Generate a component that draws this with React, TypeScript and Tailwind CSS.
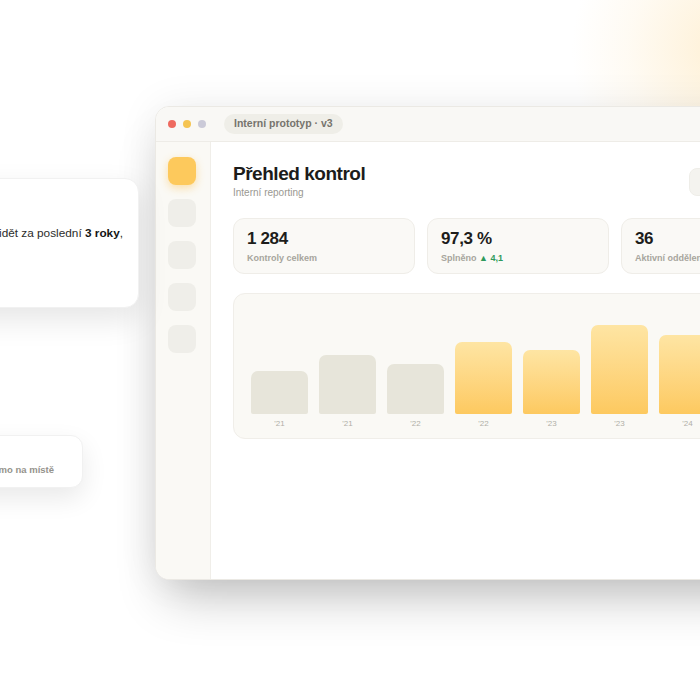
import React from "react";

const bars = [
  { label: "'21", h: 43, hot: false },
  { label: "'21", h: 59, hot: false },
  { label: "'22", h: 50, hot: false },
  { label: "'22", h: 72, hot: true },
  { label: "'23", h: 64, hot: true },
  { label: "'23", h: 89, hot: true },
  { label: "'24", h: 79, hot: true },
  { label: "'24", h: 84, hot: true },
];

function StatCard({ value, children }: { value: string; children: React.ReactNode }) {
  return (
    <div className="w-[182px] h-[56px] shrink-0 rounded-[11px] border border-[#efede8] bg-[#faf9f6] px-[13px] pt-[10px]">
      <div className="text-[17px] leading-[20px] font-bold tracking-[-0.02em] text-[#1d1d1b]">{value}</div>
      <div className="mt-[3px] text-[9px] leading-[12px] font-bold text-[#a7a59d] whitespace-nowrap">{children}</div>
    </div>
  );
}

export default function App() {
  return (
    <div className="relative w-[700px] h-[700px] overflow-hidden bg-white font-['Liberation_Sans',Arial,sans-serif]">
      {/* warm glow in the corner */}
      <div className="absolute -right-[190px] -top-[110px] w-[320px] h-[320px] bg-[radial-gradient(circle,rgba(253,214,140,0.38)_0%,rgba(253,226,175,0.15)_45%,rgba(255,255,255,0)_70%)]" />

      {/* app window */}
      <div className="absolute left-[155px] top-[106px] w-[760px] h-[474px] rounded-[14px] border border-[#ebe9e4] bg-white overflow-hidden shadow-[0_28px_50px_-12px_rgba(0,0,0,0.24),0_0_40px_rgba(0,0,0,0.07)]">
        {/* title bar */}
        <div className="h-[35px] flex items-center pl-[12px] bg-[#f9f8f5] border-b border-[#eeece7]">
          <div className="flex gap-[7px]">
            <span className="w-[8px] h-[8px] rounded-full bg-[#ee6a5f]" />
            <span className="w-[8px] h-[8px] rounded-full bg-[#f5c451]" />
            <span className="w-[8px] h-[8px] rounded-full bg-[#cbcad8]" />
          </div>
          <div className="ml-[18px] h-[20px] px-[10px] flex items-center rounded-full bg-[#efeee8] text-[10.5px] font-bold text-[#76746d] whitespace-nowrap">
            Interní prototyp · v3
          </div>
        </div>

        <div className="flex h-[438px]">
          {/* sidebar */}
          <div className="w-[55px] shrink-0 border-r border-[#f0eee9] bg-[#faf9f5] pl-[12px] pt-[15px] flex flex-col gap-[14px]">
            <div className="w-[28px] h-[28px] rounded-[8px] bg-[#fdc95c] shadow-[0_3px_8px_rgba(253,190,70,0.45)]" />
            <div className="w-[28px] h-[28px] rounded-[8px] bg-[#efeee9]" />
            <div className="w-[28px] h-[28px] rounded-[8px] bg-[#efeee9]" />
            <div className="w-[28px] h-[28px] rounded-[8px] bg-[#efeee9]" />
            <div className="w-[28px] h-[28px] rounded-[8px] bg-[#efeee9]" />
          </div>

          {/* main */}
          <div className="flex-1 pl-[22px] pt-[20px] pr-[22px]">
            <div className="flex items-start justify-between">
              <div>
                <div className="text-[19px] leading-[23px] font-bold tracking-[-0.025em] text-[#1c1c1a]">Přehled kontrol</div>
                <div className="mt-[1px] text-[10px] leading-[14px] text-[#9a9891]">Interní reporting</div>
              </div>
              <div className="mt-[6px] w-[203px] h-[28px] rounded-[8px] bg-[#f4f3ef] border border-[#eeede8]" />
            </div>

            <div className="mt-[18px] flex gap-[12px]">
              <StatCard value="1 284">Kontroly celkem</StatCard>
              <StatCard value="97,3 %">
                Splněno <span className="text-[#2f9a5c]">▲ 4,1</span>
              </StatCard>
              <StatCard value="36">Aktivní oddělení</StatCard>
            </div>

            <div className="mt-[19px] w-[600px] rounded-[12px] border border-[#f0eee9] bg-[#faf9f5] pl-[17px] pt-[18px] pb-[9px]">
              <div className="flex gap-[11px] items-end h-[102px]">
                {bars.map((b, i) => (
                  <div
                    key={i}
                    className={
                      b.hot
                        ? "w-[57px] shrink-0 rounded-t-[7px] rounded-b-[2px] bg-gradient-to-b from-[#fee5a3] to-[#fdc95f]"
                        : "w-[57px] shrink-0 rounded-t-[7px] rounded-b-[2px] bg-[#e7e5da]"
                    }
                    style={{ height: b.h }}
                  />
                ))}
              </div>
              <div className="mt-[5px] flex gap-[11px]">
                {bars.map((b, i) => (
                  <div key={i} className="w-[57px] shrink-0 text-center text-[8px] leading-[10px] text-[#b1afa7]">
                    {b.label}
                  </div>
                ))}
              </div>
            </div>
          </div>
        </div>
      </div>

      {/* chat bubble card */}
      <div className="absolute left-[-161px] top-[178px] w-[300px] h-[130px] rounded-[14px] bg-white border border-[#f1f1f1] shadow-[0_12px_30px_rgba(0,0,0,0.10)] pt-[45px] pr-[15px] flex justify-end">
        <p className="text-[11.8px] leading-[18px] text-[#2c2c2a] whitespace-nowrap">
          Chci vidět za poslední <b className="text-[#151514]">3 roky</b>,
        </p>
      </div>

      {/* small note card */}
      <div className="absolute left-[-157px] top-[435px] w-[240px] h-[53px] rounded-[12px] bg-white border border-[#f1f1f1] shadow-[0_10px_26px_rgba(0,0,0,0.09)] pr-[28px] pt-[28px] flex justify-end">
        <span className="text-[9.5px] leading-[12px] font-bold text-[#95938c] whitespace-nowrap">Kontrola přímo na místě</span>
      </div>
    </div>
  );
}
